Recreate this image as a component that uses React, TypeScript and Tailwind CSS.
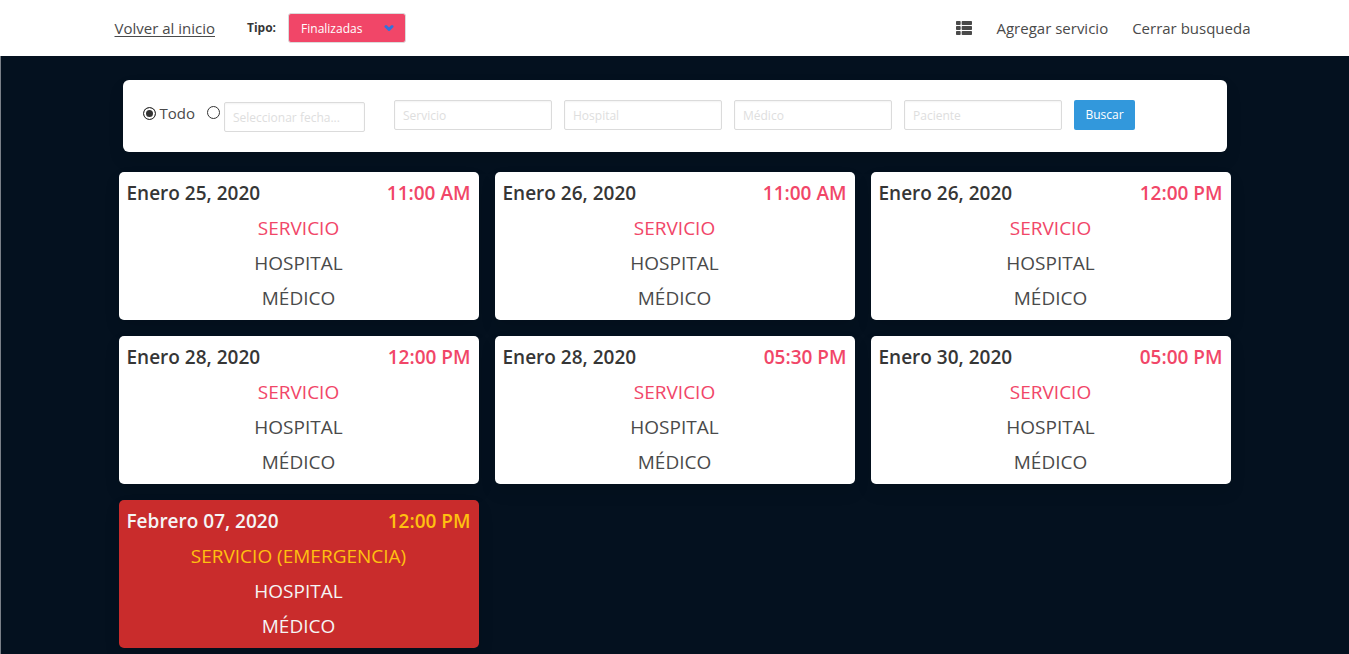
import { useState } from "react";
import { FaThList } from "react-icons/fa";

type Service = {
  date: string;
  time: string;
  service: string;
  emergency?: boolean;
};

const services: Service[] = [
  { date: "Enero 25, 2020", time: "11:00 AM", service: "SERVICIO" },
  { date: "Enero 26, 2020", time: "11:00 AM", service: "SERVICIO" },
  { date: "Enero 26, 2020", time: "12:00 PM", service: "SERVICIO" },
  { date: "Enero 28, 2020", time: "12:00 PM", service: "SERVICIO" },
  { date: "Enero 28, 2020", time: "05:30 PM", service: "SERVICIO" },
  { date: "Enero 30, 2020", time: "05:00 PM", service: "SERVICIO" },
  { date: "Febrero 07, 2020", time: "12:00 PM", service: "SERVICIO (EMERGENCIA)", emergency: true },
];

const filters = ["Servicio", "Hospital", "Médico", "Paciente"];

function Navbar() {
  return (
    <header className="bg-white">
      <nav className="mx-auto flex h-14 max-w-[1152px] items-center justify-between pl-4">
        <div className="flex items-center">
          <a href="#inicio" className="text-[15px] underline underline-offset-2">
            Volver al inicio
          </a>
          <label htmlFor="tipo" className="ml-8 text-xs font-bold text-[#363636]">
            Tipo:
          </label>
          <div className="relative ml-3">
            <select
              id="tipo"
              defaultValue="Finalizadas"
              className="block h-[30px] w-[118px] appearance-none rounded-[3px] border border-[#dbdbdb] bg-[#f14668] pt-px pl-3 text-xs text-white"
            >
              <option>Finalizadas</option>
              <option>Pendientes</option>
            </select>
            <svg
              viewBox="0 0 10 8"
              className="pointer-events-none absolute top-[11px] right-3 h-2 w-[10px]"
              fill="none"
              stroke="#3273dc"
              strokeWidth="3"
              strokeLinecap="round"
              strokeLinejoin="round"
              aria-hidden="true"
            >
              <path d="M2 2.5l3 3 3-3" />
            </svg>
          </div>
        </div>
        <div className="flex items-center gap-6 text-[15px]">
          <a href="#lista" aria-label="Lista">
            <FaThList className="size-4" />
          </a>
          <a href="#agregar">Agregar servicio</a>
          <a href="#cerrar">Cerrar busqueda</a>
        </div>
      </nav>
    </header>
  );
}

const field =
  "h-[30px] rounded-[2px] border border-[#dbdbdb] bg-white px-2 text-xs shadow-[inset_0_1px_2px_rgba(10,10,10,0.05)] outline-none placeholder:text-[#dedede]";

const radio =
  "size-[13px] appearance-none rounded-full border border-[#333] bg-white checked:bg-[#333] checked:shadow-[inset_0_0_0_2px_#fff]";

function SearchBar() {
  const [mode, setMode] = useState("todo");
  return (
    <form
      onSubmit={(e) => e.preventDefault()}
      className="mx-1 flex h-[72px] items-start rounded-md bg-white px-5 pt-5 shadow-[0_8px_16px_rgba(10,10,10,0.1)]"
    >
      <div className="flex items-start pt-[2px]">
        <label className="flex items-center gap-1 text-[15px]">
          <input
            type="radio"
            name="fecha"
            checked={mode === "todo"}
            onChange={() => setMode("todo")}
            className={radio}
          />
          Todo
        </label>
        <input
          type="radio"
          name="fecha"
          aria-label="Por fecha"
          checked={mode === "fecha"}
          onChange={() => setMode("fecha")}
          className={`mt-1 mr-1 ml-3 ${radio}`}
        />
        <input aria-label="Fecha" placeholder="Seleccionar fecha..." className={`w-[141px] ${field}`} />
      </div>
      <div className="ml-[29px] flex gap-3">
        {filters.map((name) => (
          <input key={name} aria-label={name} placeholder={name} className={`w-[158px] ${field}`} />
        ))}
        <button type="submit" className="h-[30px] w-[61px] rounded-[2px] bg-[#3298dc] text-xs text-white">
          Buscar
        </button>
      </div>
    </form>
  );
}

function ServiceCard({ date, time, service, emergency }: Service) {
  const accent = emergency ? "text-[#ffc010]" : "text-[#f14668]";
  return (
    <article
      className={`rounded-[5px] px-2 pt-[3px] pb-1 text-center text-[19px] shadow-[0_8px_16px_rgba(10,10,10,0.1)] ${
        emergency ? "bg-[#c92c2c] text-[#f5f5f5]" : "bg-white"
      }`}
    >
      <header className="flex h-9 items-center justify-between font-semibold">
        <h2 className={emergency ? "" : "text-[#363636]"}>{date}</h2>
        <time className={accent}>{time}</time>
      </header>
      <p className={`leading-[35px] ${accent}`}>{service}</p>
      <p className="leading-[35px]">HOSPITAL</p>
      <p className="leading-[35px]">MÉDICO</p>
    </article>
  );
}

export default function App() {
  return (
    <div className="flex min-h-screen flex-col bg-white font-['Open_Sans','Noto_Sans',sans-serif] text-[#4a4a4a]">
      <Navbar />
      <main className="flex-1 bg-[#04111f] pt-6 pb-[5px] shadow-[inset_1px_0_#7a8088]">
        <div className="mx-auto max-w-[1112px]">
          <SearchBar />
          <section className="mt-5 grid grid-cols-3 gap-4">
            {services.map((s) => (
              <ServiceCard key={s.date + s.time} {...s} />
            ))}
          </section>
        </div>
      </main>
    </div>
  );
}
